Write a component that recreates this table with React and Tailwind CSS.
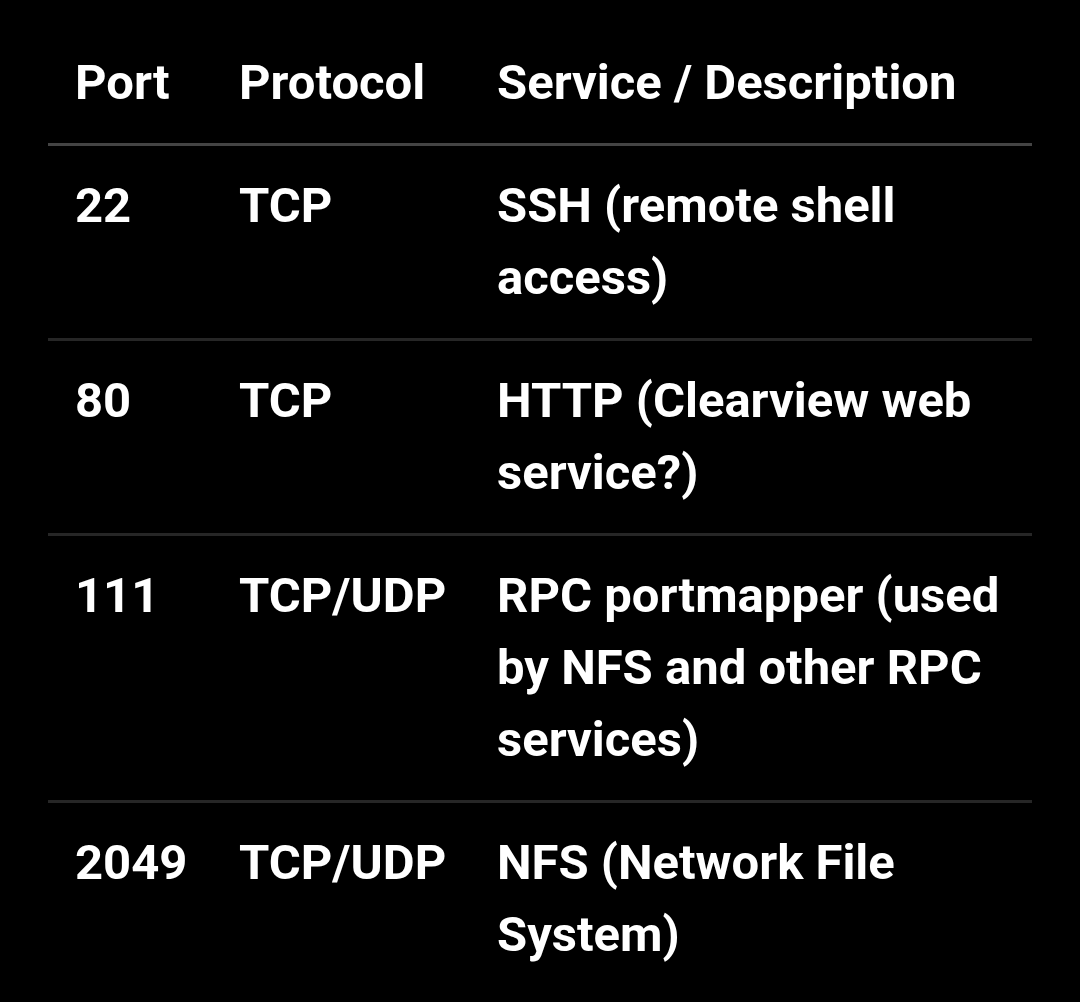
import React from 'react';

const rows = [
  { port: '22', proto: 'TCP', desc: 'SSH (remote shell access)' },
  { port: '80', proto: 'TCP', desc: 'HTTP (Clearview web service?)' },
  { port: '111', proto: 'TCP/UDP', desc: 'RPC portmapper (used by NFS and other RPC services)' },
  { port: '2049', proto: 'TCP/UDP', desc: 'NFS (Network File System)' },
];

const App = () => {
  return (
    <div className="min-h-[1002px] bg-black px-12 pt-[47px] text-white" style={{ fontFamily: 'Roboto, "Noto Sans", sans-serif' }}>
      <table className="w-[984px] table-fixed border-collapse text-[49px] font-bold leading-[72px]">
        <colgroup>
          <col className="w-[164px]" />
          <col className="w-[258px]" />
          <col />
        </colgroup>
        <thead>
          <tr className="border-b-[3px] border-[#444444]">
            <th className="pl-[27px] pr-5 pt-0 pb-6 text-left font-bold">Port</th>
            <th className="pl-[27px] pr-5 pt-0 pb-6 text-left font-bold">Protocol</th>
            <th className="pl-[27px] pr-5 pt-0 pb-6 text-left font-bold">Service / Description</th>
          </tr>
        </thead>
        <tbody>
          {rows.map((r, i) => (
            <tr key={r.port} className={i < rows.length - 1 ? 'border-b-[3px] border-[#262626]' : ''}>
              <td className="pl-[27px] pr-5 py-6 align-top">{r.port}</td>
              <td className="pl-[27px] pr-5 py-6 align-top">{r.proto}</td>
              <td className="pl-[27px] pr-5 py-6 align-top">{r.desc}</td>
            </tr>
          ))}
        </tbody>
      </table>
    </div>
  );
};

export default App;
